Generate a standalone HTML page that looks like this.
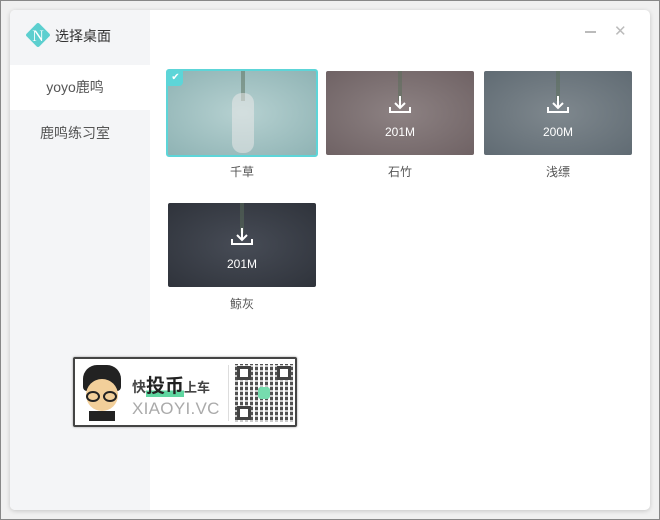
<!DOCTYPE html>
<html><head><meta charset="utf-8"><style>
*{margin:0;padding:0;box-sizing:border-box}
body{width:660px;height:520px;background:#f0f0f0;position:relative;overflow:hidden;font-family:"Liberation Sans","Noto Sans CJK SC",sans-serif}
.frame{position:absolute;left:0;top:0;width:660px;height:520px;border:1px solid #888}
.card{position:absolute;left:10px;top:10px;width:640px;height:500px;background:#fff;border-radius:5px;box-shadow:0 1px 5px rgba(0,0,0,.18);overflow:hidden}
.side{position:absolute;left:0;top:0;width:140px;height:500px;background:#f4f5f7}
.logo{position:absolute;left:15px;top:12px;width:26px;height:26px}
.title{position:absolute;left:45px;top:16px;font-size:14px;color:#333}
.item{position:absolute;left:0;width:140px;height:45px;line-height:45px;text-align:center;font-size:14px;color:#555;padding-right:10px}
.thumb{position:absolute;width:148px;height:84px;border-radius:2px;overflow:hidden}
.lbl{position:absolute;width:148px;text-align:center;font-size:12px;color:#555}
.sz{position:absolute;left:0;width:100%;top:54px;text-align:center;color:#fff;font-size:12px}
.dl{position:absolute;left:63px;top:25px}
.rope{position:absolute;left:72px;top:0;width:4px;height:30px;background:rgba(90,110,90,.5)}
</style></head><body>
<div class="frame"></div>
<div class="card">
 <div class="side">
  <svg class="logo" viewBox="0 0 26 26"><rect x="4" y="4" width="18" height="18" rx="2" transform="rotate(45 13 13)" fill="#5ccfcf"/><text x="13" y="19" font-size="16" text-anchor="middle" fill="#fff" font-family="Liberation Serif">N</text></svg>
  <div class="title">选择桌面</div>
  <div class="item" style="top:55px;background:#fff">yoyo鹿鸣</div>
  <div class="item" style="top:101px">鹿鸣练习室</div>
 </div>
 <div style="position:absolute;left:575px;top:21px;width:11px;height:1.5px;background:#bbb"></div>
 <div style="position:absolute;left:604px;top:12px;font-size:15px;color:#bbb">✕</div>

 <div class="thumb" style="left:156px;top:59px;width:152px;height:88px;border:2px solid #5dd5d8;border-radius:3px;background:radial-gradient(ellipse at 50% 50%,#b6d1d1,#8fb3b4)">
  <div class="rope" style="left:73px"></div>
  <div style="position:absolute;left:64px;top:22px;width:22px;height:60px;background:rgba(240,235,235,.5);border-radius:10px"></div>
  <div style="position:absolute;left:0;top:0;width:15px;height:15px;background:#5dd5d8;border-bottom-right-radius:4px;color:#fff;font-size:10px;text-align:center;line-height:14px">✔</div>
 </div>
 <div class="lbl" style="left:158px;top:153px">千草</div>

 <div class="thumb" style="left:316px;top:61px;background:radial-gradient(ellipse at 50% 50%,#8d8283,#6f6264)"><div class="rope"></div>
  <svg class="dl" width="22" height="20"><path d="M11 0V11M6 7L11 12L16 7" stroke="#fff" stroke-width="2" fill="none"/><path d="M1 11V16H21V11" stroke="#fff" stroke-width="2" fill="none"/></svg><div class="sz">201M</div></div>
 <div class="lbl" style="left:316px;top:153px">石竹</div>

 <div class="thumb" style="left:474px;top:61px;background:radial-gradient(ellipse at 50% 50%,#7f888e,#606b73)"><div class="rope"></div>
  <svg class="dl" width="22" height="20"><path d="M11 0V11M6 7L11 12L16 7" stroke="#fff" stroke-width="2" fill="none"/><path d="M1 11V16H21V11" stroke="#fff" stroke-width="2" fill="none"/></svg><div class="sz">200M</div></div>
 <div class="lbl" style="left:474px;top:153px">浅缥</div>

 <div class="thumb" style="left:158px;top:193px;background:radial-gradient(ellipse at 50% 50%,#474c56,#2f333b)"><div class="rope"></div>
  <svg class="dl" width="22" height="20"><path d="M11 0V11M6 7L11 12L16 7" stroke="#fff" stroke-width="2" fill="none"/><path d="M1 11V16H21V11" stroke="#fff" stroke-width="2" fill="none"/></svg><div class="sz">201M</div></div>
 <div class="lbl" style="left:158px;top:285px">鲸灰</div>

 <div style="position:absolute;left:63px;top:347px;width:224px;height:70px;background:#fff;border:2px solid #444;border-radius:2px;box-shadow:0 0 2px #999">
  <div style="position:absolute;left:6px;top:6px;width:42px;height:56px">
   <div style="position:absolute;left:2px;top:0;width:38px;height:26px;background:#222;border-radius:14px 14px 4px 4px"></div>
   <div style="position:absolute;left:5px;top:14px;width:32px;height:32px;background:#f2cf9a;border-radius:50%"></div>
   <div style="position:absolute;left:5px;top:26px;width:14px;height:11px;border:2px solid #222;border-radius:50%"></div>
   <div style="position:absolute;left:22px;top:26px;width:14px;height:11px;border:2px solid #222;border-radius:50%"></div>
   <div style="position:absolute;left:8px;top:46px;width:26px;height:10px;background:#222"></div>
  </div>
  <div style="position:absolute;left:57px;top:12px;font-size:14px;color:#444;font-weight:bold">快<span style="font-size:19px;color:#222;background:linear-gradient(transparent 70%,#5fd6a0 70%)">投币</span><span style="font-size:13px">上车</span></div>
  <div style="position:absolute;left:57px;top:40px;font-size:17px;color:#aaa;letter-spacing:0.3px">XIAOYI.VC</div>
  <div style="position:absolute;left:153px;top:6px;width:1px;height:56px;background:#ddd"></div>
  <div style="position:absolute;left:160px;top:5px;width:58px;height:58px;background:repeating-linear-gradient(90deg,#333 0 3px,#fff 3px 5px),#333;opacity:.85">
   <div style="position:absolute;inset:0;background:repeating-linear-gradient(0deg,rgba(255,255,255,.7) 0 2px,transparent 2px 5px)"></div>
   <div style="position:absolute;left:2px;top:2px;width:14px;height:14px;border:3px solid #222;background:#fff"></div>
   <div style="position:absolute;right:2px;top:2px;width:14px;height:14px;border:3px solid #222;background:#fff"></div>
   <div style="position:absolute;left:2px;bottom:2px;width:14px;height:14px;border:3px solid #222;background:#fff"></div>
   <div style="position:absolute;left:23px;top:23px;width:12px;height:12px;background:#5fd6a0;border-radius:3px"></div>
  </div>
 </div>
</div>
</body></html>
